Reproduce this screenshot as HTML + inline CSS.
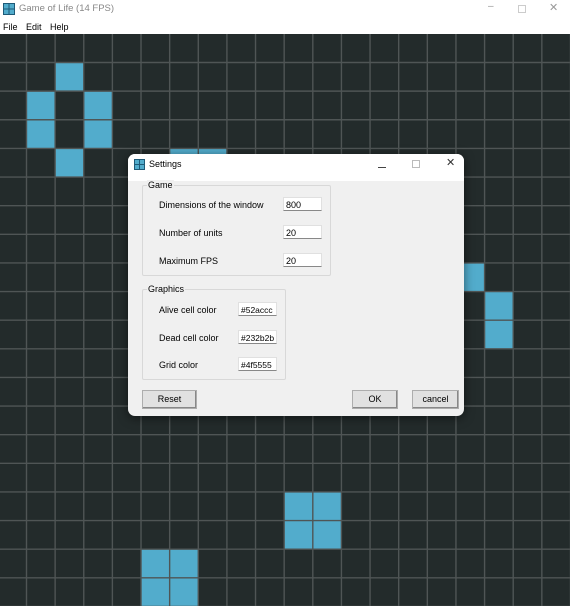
<!DOCTYPE html>
<html><head><style>
body{margin:0;width:570px;height:606px;overflow:hidden;position:relative;font-family:"Liberation Sans",sans-serif;background:#fff}
.t{position:absolute;font-size:9px;color:#000;white-space:nowrap}
#dlg{position:absolute;left:128px;top:154px;width:336px;height:262px;background:#f0f0f0;border-radius:7px;overflow:hidden;box-shadow:0 2px 10px rgba(0,0,0,.5)}
.inp{position:absolute;background:#fff;border:1px solid #e0e0e0;border-bottom:1px solid #888;height:14px;font-size:9px;line-height:14px;padding-left:2px;box-sizing:border-box}
.grp{position:absolute;border:1px solid #d8d8d8;border-radius:2px}
.btn{position:absolute;background:#e1e1e1;border:1px solid #adadad;box-sizing:border-box;font-size:9px;text-align:center;line-height:17px;height:19px;box-shadow:inset -1px -1px 0 #888}
</style></head><body>
<svg style="position:absolute;left:3px;top:3px" width="12" height="12"><rect width="12" height="12" fill="#1e5a78"/><rect x="1" y="1" width="4.5" height="4.5" fill="#52accc"/><rect x="6.5" y="1" width="4.5" height="4.5" fill="#52accc"/><rect x="1" y="6.5" width="4.5" height="4.5" fill="#52accc"/><rect x="6.5" y="6.5" width="4.5" height="4.5" fill="#52accc"/></svg>
<div class="t" style="left:19px;top:3px;color:#888;font-size:9.5px">Game of Life (14 FPS)</div>
<div class="t" style="left:488px;top:1px;color:#999;font-size:10px">–</div>
<div style="position:absolute;left:518px;top:5px;width:6px;height:6px;border:1px solid #ccc"></div>
<div class="t" style="left:549px;top:1px;color:#999;font-size:11px">✕</div>
<div class="t" style="left:3px;top:22px">File</div>
<div class="t" style="left:26px;top:22px">Edit</div>
<div class="t" style="left:50px;top:22px">Help</div>
<svg id="g" style="position:absolute;left:0;top:34px" width="570" height="572"></svg>
<script>
(function(){
var s='<rect width="570" height="572" fill="#232b2b"/>';var p=28.63,ox=-2.13,oy=-0.13;
var c=[[2,1],[1,2],[3,2],[1,3],[3,3],[2,4],[6,4],[7,4],[16,8],[17,9],[17,10],[10,16],[11,16],[10,17],[11,17],[5,18],[6,18],[5,19],[6,19]];
c.forEach(function(a){s+='<rect x="'+(ox+a[0]*p)+'" y="'+(oy+a[1]*p)+'" width="'+p+'" height="'+p+'" fill="#52accc"/>';});
for(var k=1;k<21;k++){var x=ox+k*p,y=oy+k*p;s+='<line x1="'+x+'" y1="0" x2="'+x+'" y2="572" stroke="#4f5555" stroke-width="1.4"/><line x1="0" y1="'+y+'" x2="570" y2="'+y+'" stroke="#4f5555" stroke-width="1.4"/>';}
document.getElementById('g').innerHTML=s;})();
</script>
<div id="dlg">
<div style="position:absolute;left:0;top:0;width:336px;height:27px;background:#fff"></div>
<svg style="position:absolute;left:6px;top:5px" width="11" height="11"><rect width="11" height="11" fill="#1e5a78"/><rect x="1" y="1" width="4" height="4" fill="#52accc"/><rect x="6" y="1" width="4" height="4" fill="#52accc"/><rect x="1" y="6" width="4" height="4" fill="#52accc"/><rect x="6" y="6" width="4" height="4" fill="#52accc"/></svg>
<div class="t" style="left:21px;top:5px">Settings</div>
<div style="position:absolute;left:250px;top:13px;width:8px;height:1px;background:#444"></div>
<div style="position:absolute;left:284px;top:6px;width:6px;height:6px;border:1px solid #bbb"></div>
<div class="t" style="left:318px;top:2px;font-size:11px;color:#333">✕</div>
<div class="grp" style="left:14px;top:31px;width:187px;height:89px"></div>
<div class="t" style="left:19px;top:26px;background:#f0f0f0;padding:0 1px">Game</div>
<div class="t" style="left:31px;top:46px">Dimensions of the window</div>
<div class="inp" style="left:155px;top:43px;width:39px">800</div>
<div class="t" style="left:31px;top:74px">Number of units</div>
<div class="inp" style="left:155px;top:71px;width:39px">20</div>
<div class="t" style="left:31px;top:102px">Maximum FPS</div>
<div class="inp" style="left:155px;top:99px;width:39px">20</div>
<div class="grp" style="left:14px;top:135px;width:142px;height:89px"></div>
<div class="t" style="left:19px;top:130px;background:#f0f0f0;padding:0 1px">Graphics</div>
<div class="t" style="left:31px;top:151px">Alive cell color</div>
<div class="inp" style="left:110px;top:148px;width:39px;font-size:8.5px">#52accc</div>
<div class="t" style="left:31px;top:179px">Dead cell color</div>
<div class="inp" style="left:110px;top:176px;width:39px;font-size:8.5px">#232b2b</div>
<div class="t" style="left:31px;top:206px">Grid color</div>
<div class="inp" style="left:110px;top:203px;width:39px;font-size:8.5px">#4f5555</div>
<div class="btn" style="left:14px;top:236px;width:55px">Reset</div>
<div class="btn" style="left:224px;top:236px;width:46px">OK</div>
<div class="btn" style="left:284px;top:236px;width:47px">cancel</div>
</div>
</body></html>
